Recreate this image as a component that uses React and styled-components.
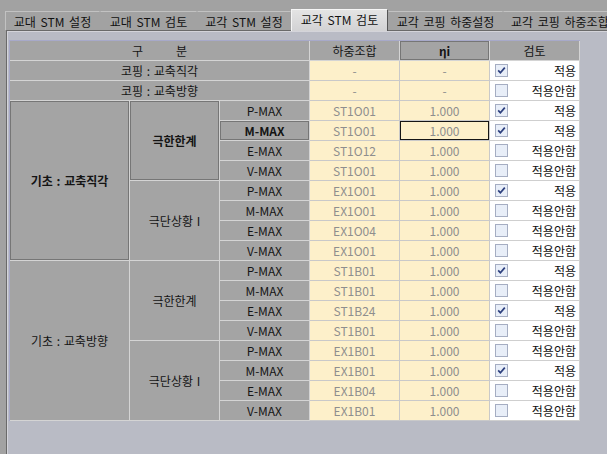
import React from 'react';
import styled, { createGlobalStyle } from 'styled-components';

const Global = createGlobalStyle`
  html, body { margin: 0; padding: 0; background: #a2a2a2; }
  body {
    font-family: "Noto Sans CJK KR", "Noto Sans", sans-serif;
    font-size: 12px;
    color: #111;
  }
`;

const Window = styled.div`
  width: 607px;
  height: 454px;
  overflow: hidden;
  background: #a2a2a2;
  display: flex;
  flex-direction: column;
`;

const TabBar = styled.div`
  flex: none;
  display: flex;
  align-items: flex-end;
  height: 30px;
  padding-left: 5px;
  white-space: nowrap;
`;

const Tab = styled.div`
  flex: none;
  position: relative;
  z-index: ${p => (p.$active ? 2 : 1)};
  width: ${p => p.$w}px;
  height: ${p => (p.$active ? 22 : 19)}px;
  margin-bottom: ${p => (p.$active ? -1 : 0)}px;
  box-sizing: border-box;
  display: flex;
  align-items: center;
  justify-content: ${p => (p.$start ? 'flex-start' : 'center')};
  padding: 0 ${p => (p.$start ? 7 : 0)}px ${p => (p.$active ? 2 : 0)}px;
  word-spacing: 2px;
  background: ${p => (p.$active ? 'linear-gradient(#e4e4e4, #d2d2d4)' : '#a2a2a2')};
  border-top: 1px solid ${p => (p.$active ? '#f6f6f6' : '#c2c2c2')};
  border-left: 1px solid ${p => (p.$active ? '#f6f6f6' : 'transparent')};
  border-right: 1px solid ${p => (p.$active ? '#555' : 'transparent')};
  &:first-child { border-left-color: #c2c2c2; }
`;

const Panel = styled.div`
  flex: 1;
  margin-left: 6px;
  border-top: 1px solid #6a6a6a;
  border-left: 1px solid #6a6a6a;
  background: #b9bbc5;
  box-shadow: inset 1px 1px 0 #d4d4da;
  padding: 9px 0 0 2px;
`;

const Grid = styled.div`
  display: grid;
  grid-template-columns: 120px 90px 90px 90px 90px 90px;
  grid-auto-rows: 20px;
  width: max-content;
  border-top: 1px solid #a7a9c9;
  border-left: 1px solid #a7a9c9;
`;

const Cell = styled.div`
  box-sizing: border-box;
  display: flex;
  align-items: center;
  justify-content: center;
  border-right: 1px solid #d4d4d4;
  border-bottom: 1px solid #d4d4d4;
  white-space: nowrap;
`;

const GrayCell = styled(Cell)`
  grid-column: span ${p => p.$cols || 1};
  grid-row: span ${p => p.$rows || 1};
  background: #a4a4a4;
  color: #141414;
  word-spacing: 1px;
  font-weight: ${p => (p.$bold ? 700 : 400)};
  box-shadow: ${p => (p.$framed ? 'inset 0 0 0 1px #767676' : 'none')};
`;

const YellowCell = styled(Cell)`
  background: #fdf0ca;
  color: #8e8e8e;
  border-right-color: #c9c9c9;
  border-bottom-color: #c9c9c9;
  box-shadow: ${p => (p.$focus ? 'inset 0 0 0 1px #151515' : 'none')};
`;

const CheckCell = styled(Cell)`
  justify-content: space-between;
  background: #ffffff;
  padding: 0 3px 0 5px;
  border-right-color: #cfcfcf;
  border-bottom-color: #cfcfcf;
  color: #111;
`;

const Box = styled.span`
  width: 13px;
  height: 13px;
  box-sizing: border-box;
  border: 1px solid #a5adc2;
  background: #e8eef8;
  display: flex;
  align-items: center;
  justify-content: center;
`;

const Spaced = styled.span`
  display: flex;
  gap: 33px;
`;

const Check = ({ on }) => (
  <Box>
    {on && (
      <svg width="11" height="11" viewBox="0 0 11 11">
        <path d="M2.2 5.4 L4.4 7.8 L8.8 2.6" fill="none" stroke="#2c3f7e" strokeWidth="1.7" />
      </svg>
    )}
  </Box>
);

const tabs = [
  { t: '교대 STM 설정', w: 95 },
  { t: '교대 STM 검토', w: 97 },
  { t: '교각 STM 설정', w: 94 },
  { t: '교각 STM 검토', w: 97, active: true },
  { t: '교각 코핑 하중설정', w: 115 },
  { t: '교각 코핑 하중조합', w: 120, start: true },
];

const groups = [
  {
    label: '기초 : 교축직각',
    framed: true,
    subs: [
      {
        label: '극한한계',
        framed: true,
        rows: [
          ['P-MAX', 'ST1O01', true],
          ['M-MAX', 'ST1O01', true, true],
          ['E-MAX', 'ST1O12', false],
          ['V-MAX', 'ST1O01', false],
        ],
      },
      {
        label: '극단상황 I',
        rows: [
          ['P-MAX', 'EX1O01', true],
          ['M-MAX', 'EX1O01', false],
          ['E-MAX', 'EX1O04', false],
          ['V-MAX', 'EX1O01', false],
        ],
      },
    ],
  },
  {
    label: '기초 : 교축방향',
    subs: [
      {
        label: '극한한계',
        rows: [
          ['P-MAX', 'ST1B01', true],
          ['M-MAX', 'ST1B01', false],
          ['E-MAX', 'ST1B24', true],
          ['V-MAX', 'ST1B01', false],
        ],
      },
      {
        label: '극단상황 I',
        rows: [
          ['P-MAX', 'EX1B01', false],
          ['M-MAX', 'EX1B01', true],
          ['E-MAX', 'EX1B04', false],
          ['V-MAX', 'EX1B01', false],
        ],
      },
    ],
  },
];

const CheckText = ({ on }) => (
  <CheckCell>
    <Check on={on} />
    <span>{on ? '적용' : '적용안함'}</span>
  </CheckCell>
);

export default function App() {
  return (
    <Window>
      <Global />
      <TabBar>
        {tabs.map(tab => (
          <Tab key={tab.t} $w={tab.w} $active={tab.active} $start={tab.start}>
            {tab.t}
          </Tab>
        ))}
      </TabBar>
      <Panel>
        <Grid>
          <GrayCell $cols={3}>
            <Spaced>
              <span>구</span>
              <span>분</span>
            </Spaced>
          </GrayCell>
          <GrayCell>하중조합</GrayCell>
          <GrayCell $bold $framed>ηi</GrayCell>
          <GrayCell>검토</GrayCell>

          <GrayCell $cols={3}>코핑 : 교축직각</GrayCell>
          <YellowCell>-</YellowCell>
          <YellowCell>-</YellowCell>
          <CheckText on />

          <GrayCell $cols={3}>코핑 : 교축방향</GrayCell>
          <YellowCell>-</YellowCell>
          <YellowCell>-</YellowCell>
          <CheckText on={false} />

          {groups.map(g => (
            <React.Fragment key={g.label}>
              <GrayCell $rows={8} $bold={g.framed} $framed={g.framed}>
                {g.label}
              </GrayCell>
              {g.subs.map((s, si) => (
                <React.Fragment key={si}>
                  <GrayCell $rows={4} $bold={s.framed} $framed={s.framed}>
                    {s.label}
                  </GrayCell>
                  {s.rows.map(([name, combo, on, sel]) => (
                    <React.Fragment key={name}>
                      <GrayCell $bold={sel} $framed={sel}>{name}</GrayCell>
                      <YellowCell>{combo}</YellowCell>
                      <YellowCell $focus={sel}>1.000</YellowCell>
                      <CheckText on={on} />
                    </React.Fragment>
                  ))}
                </React.Fragment>
              ))}
            </React.Fragment>
          ))}
        </Grid>
      </Panel>
    </Window>
  );
}
